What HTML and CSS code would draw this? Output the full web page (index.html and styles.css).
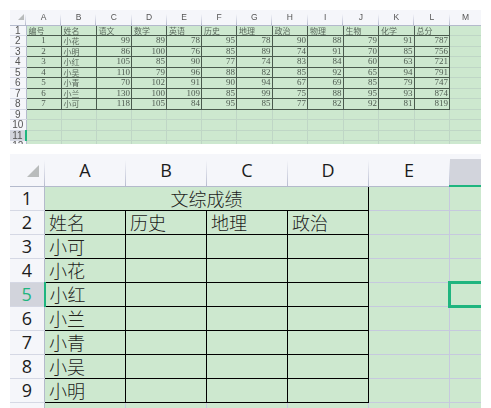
FILE: index.html
```html
<!DOCTYPE html>
<html lang="en">
<head>
    <meta charset="UTF-8">
    <meta name="viewport" content="width=device-width, initial-scale=1.0">
    <title>成绩表</title>
    <link rel="stylesheet" href="styles.css">
</head>
<body>

<div class="sheet small">
    <table>
        <colgroup>
            <col class="row-col">
            <col class="c-a"><col class="c-b"><col class="c-c"><col class="c-d"><col class="c-e"><col class="c-f">
            <col class="c-g"><col class="c-h"><col class="c-i"><col class="c-j"><col class="c-k"><col class="c-l"><col class="c-m">
        </colgroup>
        <thead>
            <tr>
                <th class="corner"><span class="corner-mark"></span></th>
                <th>A</th><th>B</th><th>C</th><th>D</th><th>E</th><th>F</th><th>G</th><th>H</th><th>I</th><th>J</th><th>K</th><th>L</th><th>M</th>
            </tr>
        </thead>
        <tbody>
            <tr class="line"><th>1</th><td>编号</td><td>姓名</td><td>语文</td><td>数学</td><td>英语</td><td>历史</td><td>地理</td><td>政治</td><td>物理</td><td>生物</td><td>化学</td><td>总分</td><td class="free"></td></tr>
            <tr class="line"><th>2</th><td class="mid">1</td><td>小花</td><td class="num">99</td><td class="num">89</td><td class="num">78</td><td class="num">95</td><td class="num">78</td><td class="num">90</td><td class="num">88</td><td class="num">79</td><td class="num">91</td><td class="num">787</td><td class="free"></td></tr>
            <tr class="line"><th>3</th><td class="mid">2</td><td>小明</td><td class="num">86</td><td class="num">100</td><td class="num">76</td><td class="num">85</td><td class="num">89</td><td class="num">74</td><td class="num">91</td><td class="num">70</td><td class="num">85</td><td class="num">756</td><td class="free"></td></tr>
            <tr class="line"><th>4</th><td class="mid">3</td><td>小红</td><td class="num">105</td><td class="num">85</td><td class="num">90</td><td class="num">77</td><td class="num">74</td><td class="num">83</td><td class="num">84</td><td class="num">60</td><td class="num">63</td><td class="num">721</td><td class="free"></td></tr>
            <tr class="line"><th>5</th><td class="mid">4</td><td>小吴</td><td class="num">110</td><td class="num">79</td><td class="num">96</td><td class="num">88</td><td class="num">82</td><td class="num">85</td><td class="num">92</td><td class="num">65</td><td class="num">94</td><td class="num">791</td><td class="free"></td></tr>
            <tr class="line"><th>6</th><td class="mid">5</td><td>小青</td><td class="num">70</td><td class="num">102</td><td class="num">91</td><td class="num">90</td><td class="num">94</td><td class="num">67</td><td class="num">69</td><td class="num">85</td><td class="num">79</td><td class="num">747</td><td class="free"></td></tr>
            <tr class="line"><th>7</th><td class="mid">6</td><td>小兰</td><td class="num">130</td><td class="num">100</td><td class="num">109</td><td class="num">85</td><td class="num">99</td><td class="num">75</td><td class="num">88</td><td class="num">95</td><td class="num">93</td><td class="num">874</td><td class="free"></td></tr>
            <tr class="line"><th>8</th><td class="mid">7</td><td>小可</td><td class="num">118</td><td class="num">105</td><td class="num">84</td><td class="num">95</td><td class="num">85</td><td class="num">77</td><td class="num">82</td><td class="num">92</td><td class="num">81</td><td class="num">819</td><td class="free"></td></tr>
            <tr><th>9</th><td></td><td></td><td></td><td></td><td></td><td></td><td></td><td></td><td></td><td></td><td></td><td></td><td></td></tr>
            <tr><th>10</th><td></td><td></td><td></td><td></td><td></td><td></td><td></td><td></td><td></td><td></td><td></td><td></td><td></td></tr>
            <tr><th class="row-on">11</th><td></td><td></td><td></td><td></td><td></td><td></td><td></td><td></td><td></td><td></td><td></td><td></td><td></td></tr>
            <tr><th>12</th><td></td><td></td><td></td><td></td><td></td><td></td><td></td><td></td><td></td><td></td><td></td><td></td><td></td></tr>
        </tbody>
    </table>
</div>

<div class="sheet big">
    <table>
        <colgroup>
            <col class="row-col">
            <col class="c-a"><col class="c-b"><col class="c-c"><col class="c-d"><col class="c-e"><col class="c-f">
        </colgroup>
        <thead>
            <tr>
                <th class="corner"><span class="corner-mark"></span></th>
                <th>A</th><th>B</th><th>C</th><th>D</th><th>E</th><th class="col-on"></th>
            </tr>
        </thead>
        <tbody>
            <tr><th>1</th><td class="line title" colspan="4">文综成绩</td><td></td><td></td></tr>
            <tr class="line"><th>2</th><td>姓名</td><td>历史</td><td>地理</td><td>政治</td><td class="free"></td><td></td></tr>
            <tr class="line"><th>3</th><td>小可</td><td></td><td></td><td></td><td class="free"></td><td></td></tr>
            <tr class="line"><th>4</th><td>小花</td><td></td><td></td><td></td><td class="free"></td><td></td></tr>
            <tr class="line"><th class="row-on">5</th><td>小红</td><td></td><td></td><td></td><td class="free"></td><td class="picked"></td></tr>
            <tr class="line"><th>6</th><td>小兰</td><td></td><td></td><td></td><td class="free"></td><td></td></tr>
            <tr class="line"><th>7</th><td>小青</td><td></td><td></td><td></td><td class="free"></td><td></td></tr>
            <tr class="line"><th>8</th><td>小吴</td><td></td><td></td><td></td><td class="free"></td><td></td></tr>
            <tr class="line"><th>9</th><td>小明</td><td></td><td></td><td></td><td class="free"></td><td></td></tr>
            <tr><th></th><td></td><td></td><td></td><td></td><td></td><td></td></tr>
        </tbody>
    </table>
</div>

</body>
</html>
```

FILE: styles.css
```css
html, body {
    margin: 0;
    background: #fff;
}
body {
    padding: 10px;
    font-family: "Liberation Sans", "Noto Sans CJK SC", sans-serif;
    color: #333;
}
.sheet {
    width: 471px;
    overflow: hidden;
    background: #cde8cf;
}
.small {
    height: 134px;
}
.big {
    height: 254px;
    margin-top: 10px;
}
table {
    table-layout: fixed;
    border-collapse: collapse;
    width: 471px;
}
th {
    background: #f5f6fa;
    font-weight: normal;
    padding: 0;
    text-align: center;
    white-space: nowrap;
}
td {
    padding: 0;
    white-space: nowrap;
    background: #cde8cf;
    border: 1px solid #c4cfd6;
}
thead th {
    border-bottom: 1px solid #b4bacc;
    background-image: linear-gradient(#f5f6fa, #b9bdd0);
    background-repeat: no-repeat;
    background-position: right bottom;
}
tbody th {
    border-right: 1px solid #b4bacc;
    border-bottom: 1px solid #d5d8e4;
}
.corner {
    text-align: right;
}
.corner-mark {
    display: inline-block;
    border-style: solid;
    border-color: transparent #b9bcbc #b9bcbc transparent;
}
.sheet tbody .row-on {
    background: #d2d4dc;
    color: #1fb57f;
    border-right: 2px solid #1fb57f;
}
.sheet thead .col-on {
    background: linear-gradient(#f5f6fa 5px, #d2d4dc 5px);
    border-bottom: 2px solid #1fb57f;
}

/* upper sheet: small blurred copy */
.small table {
    filter: blur(0.3px);
}
.small thead tr {
    height: 15px;
}
.small tbody tr {
    height: 10.5px;
}
.small thead th {
    font-size: 8.5px;
    color: #555;
    background-size: 1px 11px;
}
.small tbody th {
    font-size: 10px;
    line-height: 9px;
    color: #555;
}
.small tbody .row-on {
    color: #555;
}
.small td {
    font-family: "Noto Sans CJK SC", sans-serif;
    font-size: 8px;
    line-height: 9px;
    color: #5b6a5d;
    padding-left: 2px;
    border-color: #bfd6c6;
}
.small .row-col { width: 16px; }
.small .c-a, .small .c-b, .small .c-d, .small .c-e, .small .c-f { width: 35px; }
.small .c-c, .small .c-g, .small .c-h, .small .c-i, .small .c-j, .small .c-k, .small .c-l { width: 35.5px; }
.small .c-m { width: 32px; }
.small .corner-mark {
    border-width: 3px;
    margin-right: 2px;
}
.small .line td {
    border-color: #4a5a4e;
}
.small .line td.free {
    border-color: #bfd6c6;
    border-left-color: #4a5a4e;
    border-top-color: #bfd6c6;
}
.small tbody tr:first-child td {
    border-top-color: #a9b8b8;
}
.small .num {
    font-family: "Liberation Serif", serif;
    font-size: 9px;
    text-align: right;
    padding-left: 0;
    padding-right: 1px;
    color: #4e5a50;
}
.small .mid {
    font-family: "Liberation Serif", serif;
    font-size: 9px;
    text-align: center;
    padding-left: 0;
    color: #4e5a50;
}

/* lower sheet: the real size grid */
.big thead tr {
    height: 32px;
}
.big tbody tr {
    height: 24px;
}
.big thead th {
    background-size: 1px 26px;
}
.big th {
    font-family: "Open Sans", sans-serif;
    font-size: 18px;
    line-height: 20px;
    color: #1c1c1c;
}
.big td {
    font-family: "Noto Sans CJK SC", sans-serif;
    font-weight: 300;
    font-size: 18px;
    line-height: 20px;
    padding: 0 0 1px 4px;
    color: #22221c;
    border-color: #c6c9de;
}
.big .row-col { width: 34.5px; }
.big .c-a, .big .c-b, .big .c-c, .big .c-d, .big .c-e { width: 81px; }
.big .c-f { width: 31.5px; }
.big .corner-mark {
    border-width: 6.5px;
    margin-right: 6px;
}
.big .line td, .big td.line {
    border: 1px solid #000;
}
.big .line td.free, .big .line td:last-child {
    border-color: #c6c9de;
}
.big .line td.free {
    border-left-color: #000;
}
.big .title {
    text-align: center;
    padding-left: 0;
}
.big .line td.picked {
    border: 3px solid #1fb57f;
    border-right: none;
}
```
